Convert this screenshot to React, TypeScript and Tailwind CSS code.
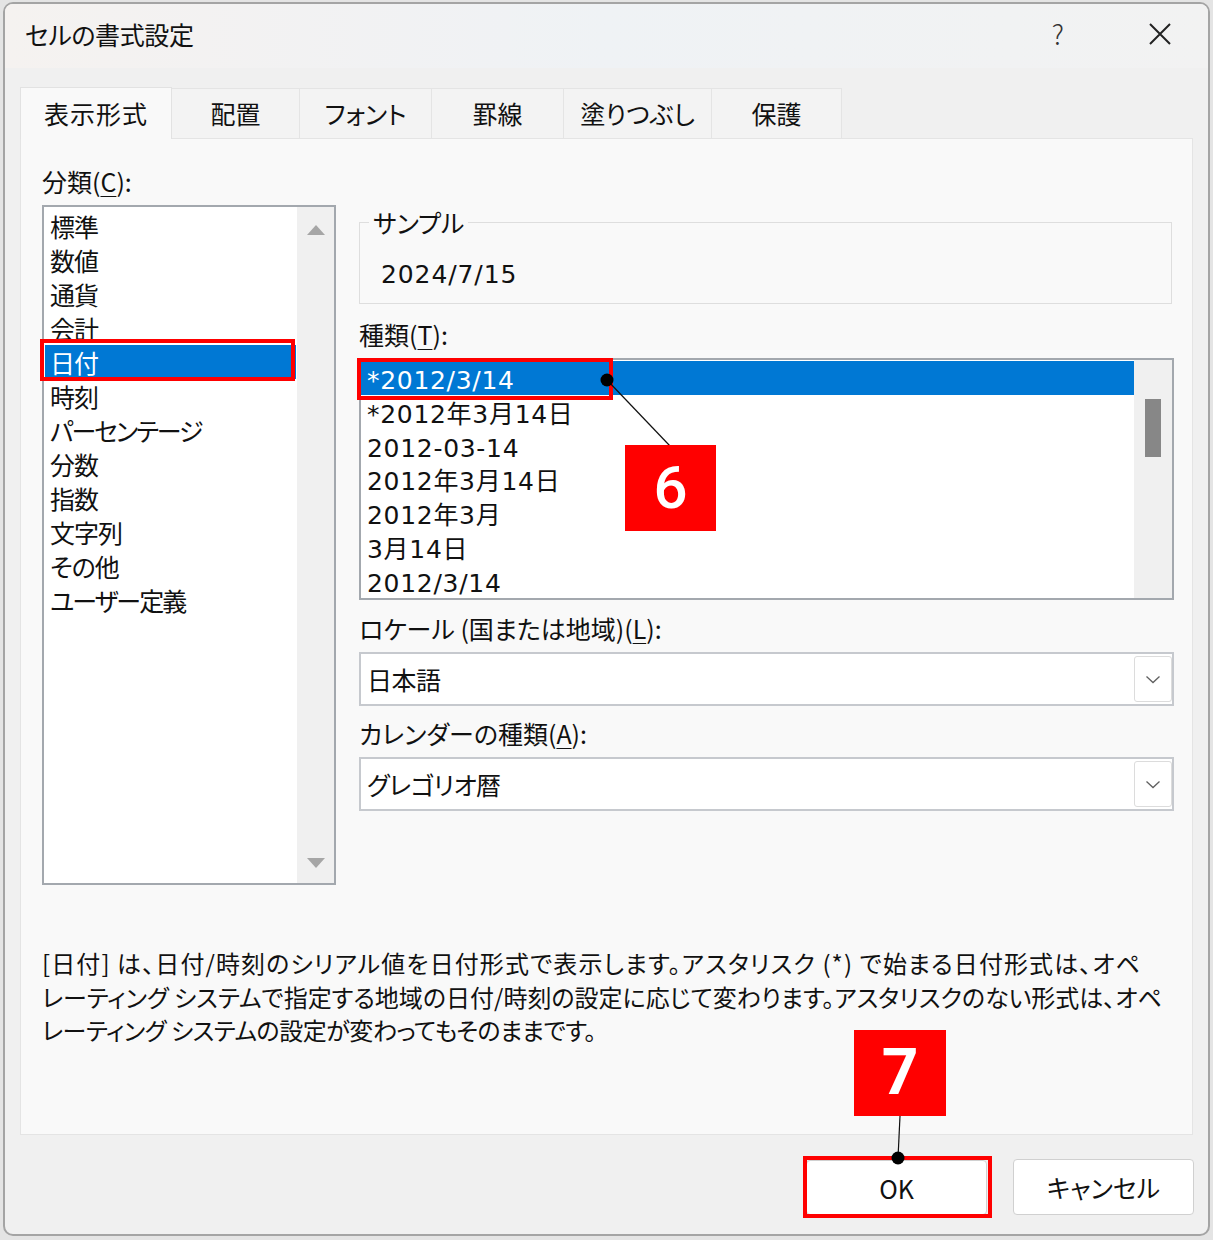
import React from "react";

const ui = "font-['Noto_Sans_CJK_JP',sans-serif] [font-feature-settings:'palt']";
const mono = "font-['DejaVu_Sans','Noto_Sans_CJK_JP',sans-serif]";

const categories = ["標準", "数値", "通貨", "会計", "日付", "時刻", "パーセンテージ", "分数", "指数", "文字列", "その他", "ユーザー定義"];
const types = ["*2012/3/14", "*2012年3月14日", "2012-03-14", "2012年3月14日", "2012年3月", "3月14日", "2012/3/14"];
const tabs = [
  { label: "表示形式", w: "w-[152px]" },
  { label: "配置", w: "w-[128px]" },
  { label: "フォント", w: "w-[132px]" },
  { label: "罫線", w: "w-[132px]" },
  { label: "塗りつぶし", w: "w-[148px]" },
  { label: "保護", w: "w-[130px]" },
];

function Chevron() {
  return (
    <svg width="16" height="9" viewBox="0 0 16 9">
      <path d="M1.5 1.5l6.5 6 6.5-6" fill="none" stroke="#606060" strokeWidth="1.3" />
    </svg>
  );
}

function Combo({ value }: { value: string }) {
  return (
    <div className="mt-[7px] h-[54px] border-2 border-[#c6c9ce] bg-white flex items-center">
      <span className="flex-1 pl-[6px] text-[25px] leading-[34px] tracking-[-0.5px]">{value}</span>
      <div className="h-[46px] w-[38px] border border-[#dcdcdc] rounded-[3px] bg-white flex items-center justify-center">
        <Chevron />
      </div>
    </div>
  );
}

function Label({ text, k }: { text: string; k: string }) {
  return (
    <div className="h-[34px] text-[25px] leading-[34px] whitespace-nowrap">
      {text}(<span className="underline underline-offset-[4px] decoration-1">{k}</span>):
    </div>
  );
}

export default function App() {
  return (
    <div className={`relative w-[1213px] h-[1240px] bg-[#e4e4e4] pt-[2px] pl-[3px] text-[#111] ${ui}`}>
      <div className="w-[1207px] h-[1234px] border-2 border-[#a4a4a4] rounded-[10px] overflow-hidden bg-[#f0f0f0] flex flex-col">
        {/* title bar */}
        <div className="h-[64px] shrink-0 bg-gradient-to-r from-[#f5f2f0] via-[#eff2f5] to-[#f2f2f2] flex items-center pl-[20px] pr-[36px] pb-[5px]">
          <span className="text-[25px] leading-[34px] flex-1 tracking-[-0.4px]">セルの書式設定</span>
          <span className="text-[27px] font-light text-[#333] leading-[34px]">?</span>
          <div className="ml-[84px]">
            <svg width="24" height="24" viewBox="0 0 24 24">
              <path d="M2 2l20 20M22 2L2 22" stroke="#222" strokeWidth="2" />
            </svg>
          </div>
        </div>

        <div className="px-[15px] flex flex-col">
          {/* tabs */}
          <div className="mt-[18px] flex items-end h-[52px]">
            {tabs.map((t, i) =>
              i === 0 ? (
                <div key={t.label} className={`${t.w} h-[52px] bg-[#f9f9f9] border border-b-0 border-[#e2e2e2] flex items-center justify-center text-[25px] tracking-[1px] relative top-[1px]`}>
                  {t.label}
                </div>
              ) : (
                <div key={t.label} className={`${t.w} h-[50px] bg-[#f3f3f3] border border-l-0 border-b-0 border-[#e4e4e4] flex items-center justify-center text-[25px]`}>
                  {t.label}
                </div>
              )
            )}
          </div>

          {/* panel */}
          <div className="h-[997px] bg-[#f9f9f9] border border-[#e4e4e4] pt-[25px] pl-[21px]">
            <Label text="分類" k="C" />
            <div className="mt-[7px] flex gap-[23px]">
              {/* category list */}
              <div className="w-[294px] h-[680px] border-2 border-[#a3a8ae] bg-white flex">
                <div className="flex-1 pt-[2px]">
                  {categories.map((c) => (
                    <div
                      key={c}
                      className={`h-[34px] mx-[1px] pl-[5px] text-[25px] leading-[34px] whitespace-nowrap ${c.includes("ー") ? "tracking-[-2px]" : "tracking-[-1px]"} ${c === "日付" ? "bg-[#0078d4] text-white" : ""}`}
                    >
                      {c}
                    </div>
                  ))}
                </div>
                <div className="w-[37px] bg-[#f0f0f0] flex flex-col items-center justify-between pt-[18px] pb-[15px]">
                  <svg width="18" height="10" viewBox="0 0 18 10">
                    <path d="M9 0L18 10H0z" fill="#a6a6a6" />
                  </svg>
                  <svg width="18" height="10" viewBox="0 0 18 10">
                    <path d="M0 0h18L9 10z" fill="#a6a6a6" />
                  </svg>
                </div>
              </div>

              {/* right column */}
              <div className="w-[815px] flex flex-col">
                <fieldset className="w-[813px] border border-[#dedede] pb-[11px]">
                  <legend className="ml-[9px] px-[4px] text-[25px] leading-[34px]">サンプル</legend>
                  <div className={`mt-[19px] ml-[21px] h-[34px] text-[25px] leading-[34px] tracking-[0.9px] ${mono}`}>2024/7/15</div>
                </fieldset>

                <div className="mt-[13px]">
                  <Label text="種類" k="T" />
                </div>
                <div className="mt-[7px] h-[242px] border-2 border-[#a3a8ae] bg-white flex overflow-hidden">
                  <div className="flex-1 pt-[1px] overflow-hidden">
                    {types.map((t, i) => (
                      <div
                        key={t}
                        className={`h-[33.8px] pl-[6px] text-[25px] leading-[40px] tracking-[0.7px] whitespace-nowrap ${mono} ${i === 0 ? "bg-[#0078d4] text-white" : ""}`}
                      >
                        {t}
                      </div>
                    ))}
                  </div>
                  <div className="w-[38px] bg-[#f0f0f0] pt-[39px] flex justify-center">
                    <div className="w-[16px] h-[58px] bg-[#878787]" />
                  </div>
                </div>

                <div className="mt-[11px] h-[34px] text-[25px] leading-[34px] whitespace-nowrap">
                  ロケール (国または地域)(<span className="underline underline-offset-[4px] decoration-1">L</span>):
                </div>
                <Combo value="日本語" />

                <div className="mt-[10px]">
                  <Label text="カレンダーの種類" k="A" />
                </div>
                <Combo value="グレゴリオ暦" />
              </div>
            </div>

            <div className="mt-[61px] text-[24px] leading-[33.7px] whitespace-nowrap">
              <div className="tracking-[1.1px]">[日付] は、日付/時刻のシリアル値を日付形式で表示します。アスタリスク (*) で始まる日付形式は、オペ</div>
              <div>レーティング システムで指定する地域の日付/時刻の設定に応じて変わります。アスタリスクのない形式は、オペ</div>
              <div className="tracking-[-0.45px]">レーティング システムの設定が変わってもそのままです。</div>
            </div>
          </div>

          {/* buttons */}
          <div className="mt-[24px] flex justify-end gap-[25px]">
            <button className="w-[181px] h-[55px] bg-white border border-[#d0d0d0] rounded-[4px] text-[25px] leading-[34px] mt-[1px]">
              OK
            </button>
            <button className="w-[181px] h-[56px] bg-white border border-[#d0d0d0] rounded-[4px] text-[25px] leading-[34px] relative left-[1px]">
              キャンセル
            </button>
          </div>
        </div>
      </div>

      {/* annotations */}
      <div className="absolute left-[40px] top-[339px] w-[255px] h-[42px] border-4 border-[#ff0000] pointer-events-none" />
      <div className="absolute left-[357px] top-[358px] w-[256px] h-[42px] border-4 border-[#ff0000] pointer-events-none" />
      <div className="absolute left-[803px] top-[1156px] w-[189px] h-[62px] border-4 border-[#ff0000] pointer-events-none" />

      <svg className="absolute left-0 top-0 pointer-events-none" width="1213" height="1240">
        <line x1="607" y1="380" x2="670" y2="446" stroke="#111" strokeWidth="1.2" />
        <circle cx="607" cy="380" r="6.5" fill="#000" />
        <line x1="900" y1="1116" x2="898" y2="1158" stroke="#111" strokeWidth="1.2" />
        <circle cx="898" cy="1158" r="6.5" fill="#000" />
      </svg>

      <div className="absolute left-[625px] top-[445px] w-[91px] h-[86px] bg-[#ff0000] flex items-center justify-center text-white text-[60px] font-medium font-['Roboto',sans-serif] leading-none">
        6
      </div>
      <div className="absolute left-[854px] top-[1030px] w-[92px] h-[86px] bg-[#ff0000] flex items-center justify-center text-white text-[64px] font-bold font-['Roboto',sans-serif] leading-none">
        7
      </div>
    </div>
  );
}
